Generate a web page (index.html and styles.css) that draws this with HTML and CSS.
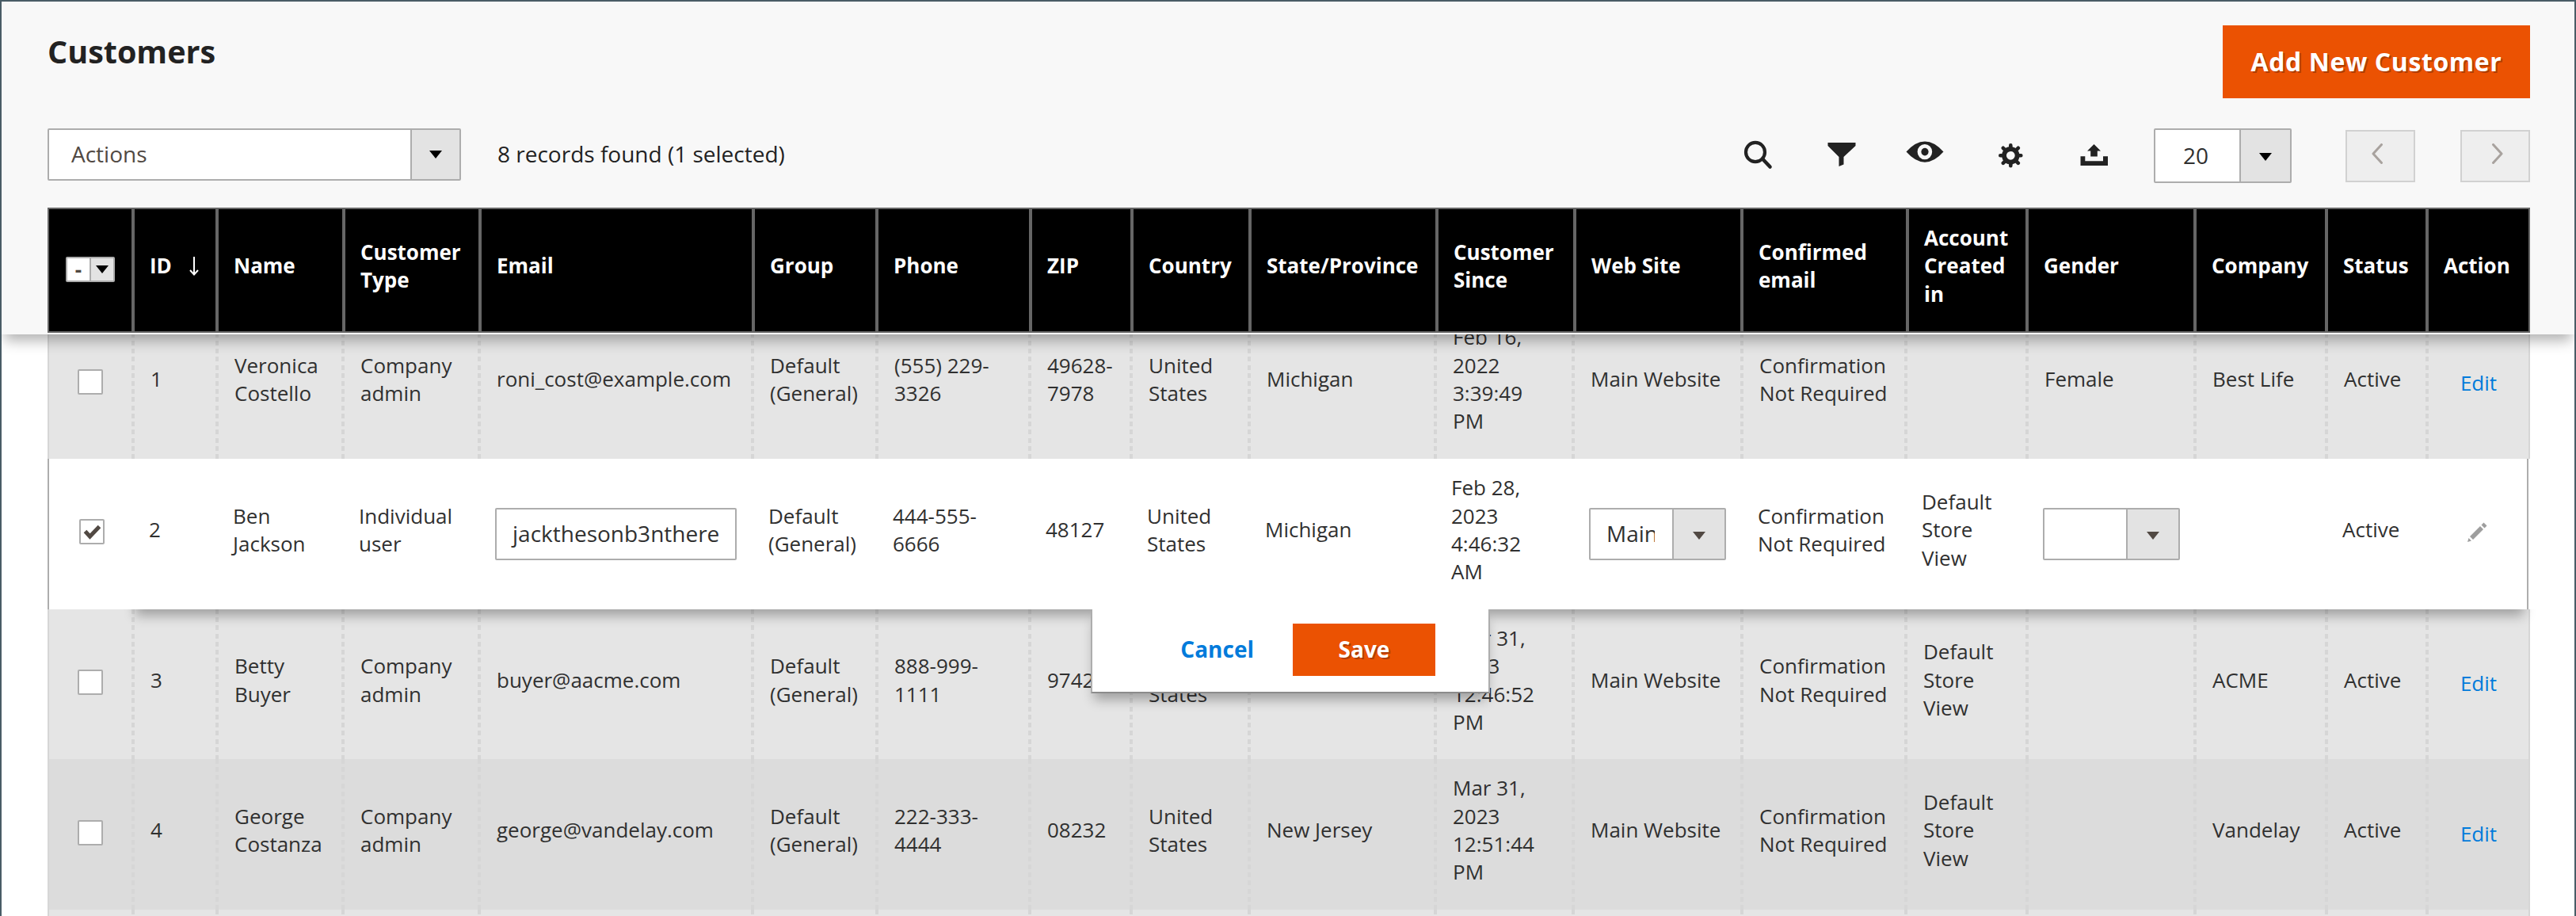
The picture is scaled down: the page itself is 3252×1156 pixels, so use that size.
FILE: index.html
```
<!DOCTYPE html>
<html lang="en">
<head>
<meta charset="utf-8">
<title>Customers</title>
<link rel="stylesheet" href="styles.css">
</head>
<body>
<main class="page">
  <header class="page-header">
    <div class="title-row">
      <h1 class="title">Customers</h1>
      <button class="btn-primary">Add New Customer</button>
    </div>
    <div class="toolbar">
      <div class="select actions-select"><span class="select-text">Actions</span><span class="select-arrow"></span></div>
      <p class="records">8 records found (1 selected)</p>
      <div class="tools">
        <svg viewBox="0 0 48 40"><ellipse cx="20" cy="18" rx="12" ry="12.2" fill="none" stroke="#222" stroke-width="4.2"/><path d="M29 26.500 38.500 36.500" stroke="#222" stroke-width="4.600" stroke-linecap="round"/></svg>
        <svg viewBox="0 0 48 40"><path d="M6.500 6H41.500V10L26.500 24V33.500L20.500 36V24L6.500 10Z"/></svg>
        <svg viewBox="0 0 48 40"><path fill-rule="evenodd" d="M.5 17.600Q12 4.500 24 4.500T47.500 17.600Q36 30.700 24 30.700T.5 17.600ZM33.200 17.600A9.300 9.600 0 1 0 14.600 17.600A9.300 9.600 0 1 0 33.200 17.600Z"/><ellipse cx="24" cy="17.600" rx="4.600" ry="4.900"/></svg>
        <svg viewBox="0 0 48 40"><g transform="translate(27.300 22.300)"><circle r="8.300" fill="none" stroke="#222" stroke-width="5.800"/><path d="M0-9V-13M0 9V13M-9 0H-13M9 0H13M6.600-6.600 9.500-9.500M-6.600 6.600-9.500 9.500M-6.600-6.600-9.500-9.500M6.600 6.600 9.500 9.500" stroke="#222" stroke-width="4.600" stroke-linecap="round"/></g></svg>
        <svg viewBox="0 0 48 40"><path d="M27.500 8 36 16.500H31.800V23.500H23.200V16.500H19ZM10.500 23.200H16.300V29.200H39V23.200H45V35H10.500Z"/></svg>
      </div>
      <div class="select size-select"><span class="select-text">20</span><span class="select-arrow"></span></div>
      <div class="pager">
        <button class="pager-btn"><svg viewBox="0 0 16 26"><path d="M13.500 1.500 3 13 13.500 24.500"/></svg></button>
        <button class="pager-btn next"><svg viewBox="0 0 16 26"><path d="M2.500 1.500 13 13 2.500 24.500"/></svg></button>
      </div>
    </div>
    <div class="grid-head">
      <div class="th check-th"><span class="multicheck"><i>-</i><b></b></span></div>
      <div class="th">ID<svg class="sort" viewBox="0 0 12 24"><path d="M6 0V22M1 17 6 22.500 11 17"/></svg></div>
      <div class="th">Name</div>
      <div class="th">Customer<br>Type</div>
      <div class="th">Email</div>
      <div class="th">Group</div>
      <div class="th">Phone</div>
      <div class="th">ZIP</div>
      <div class="th">Country</div>
      <div class="th">State/Province</div>
      <div class="th">Customer<br>Since</div>
      <div class="th">Web Site</div>
      <div class="th">Confirmed<br>email</div>
      <div class="th">Account<br>Created<br>in</div>
      <div class="th">Gender</div>
      <div class="th">Company</div>
      <div class="th">Status</div>
      <div class="th">Action</div>
    </div>
  </header>

  <section class="grid-body">
    <div class="row">
      <div class="td check-td"><span class="checkbox"></span></div>
      <div class="td">1</div>
      <div class="td">Veronica<br>Costello</div>
      <div class="td">Company<br>admin</div>
      <div class="td">roni_cost@example.com</div>
      <div class="td">Default<br>(General)</div>
      <div class="td">(555) 229-<br>3326</div>
      <div class="td">49628-<br>7978</div>
      <div class="td">United<br>States</div>
      <div class="td">Michigan</div>
      <div class="td">Feb 16,<br>2022<br>3:39:49<br>PM</div>
      <div class="td">Main Website</div>
      <div class="td">Confirmation<br>Not Required</div>
      <div class="td"></div>
      <div class="td">Female</div>
      <div class="td">Best Life</div>
      <div class="td">Active</div>
      <div class="td action-td"><a>Edit</a></div>
    </div>

    <div class="row row-editing">
      <div class="td check-td"><span class="checkbox"><svg viewBox="0 0 28 28"><path d="M5.500 13.500 11.500 20 23.500 7.500"/></svg></span></div>
      <div class="td">2</div>
      <div class="td">Ben<br>Jackson</div>
      <div class="td">Individual<br>user</div>
      <div class="td field-td"><span class="input">jackthesonb3nthere</span></div>
      <div class="td">Default<br>(General)</div>
      <div class="td">444-555-<br>6666</div>
      <div class="td">48127</div>
      <div class="td">United<br>States</div>
      <div class="td">Michigan</div>
      <div class="td">Feb 28,<br>2023<br>4:46:32<br>AM</div>
      <div class="td field-td"><span class="select cell-select"><span class="select-text"><span class="clip">Main Website</span></span><span class="select-arrow"></span></span></div>
      <div class="td">Confirmation<br>Not Required</div>
      <div class="td">Default<br>Store<br>View</div>
      <div class="td field-td"><span class="select cell-select"><span class="select-text"></span><span class="select-arrow"></span></span></div>
      <div class="td"></div>
      <div class="td">Active</div>
      <div class="td action-td"><svg class="pencil" viewBox="0 0 26 26"><path d="M21.500.5 25.500 4.500 22.500 7.500 18.500 3.500ZM17 5 21 9 8 22 4 18ZM2.500 20 6 23.500 1 25Z"/></svg></div>
      <div class="edit-popup"><a class="cancel">Cancel</a><button class="btn-primary save">Save</button></div>
    </div>

    <div class="row row-short">
      <div class="td check-td"><span class="checkbox"></span></div>
      <div class="td">3</div>
      <div class="td">Betty<br>Buyer</div>
      <div class="td">Company<br>admin</div>
      <div class="td">buyer@aacme.com</div>
      <div class="td">Default<br>(General)</div>
      <div class="td">888-999-<br>1111</div>
      <div class="td">97423</div>
      <div class="td">United<br>States</div>
      <div class="td">Oregon</div>
      <div class="td">Mar 31,<br>2023<br>12:46:52<br>PM</div>
      <div class="td">Main Website</div>
      <div class="td">Confirmation<br>Not Required</div>
      <div class="td">Default<br>Store<br>View</div>
      <div class="td"></div>
      <div class="td">ACME</div>
      <div class="td">Active</div>
      <div class="td action-td"><a>Edit</a></div>
    </div>

    <div class="row row-dark">
      <div class="td check-td"><span class="checkbox"></span></div>
      <div class="td">4</div>
      <div class="td">George<br>Costanza</div>
      <div class="td">Company<br>admin</div>
      <div class="td">george@vandelay.com</div>
      <div class="td">Default<br>(General)</div>
      <div class="td">222-333-<br>4444</div>
      <div class="td">08232</div>
      <div class="td">United<br>States</div>
      <div class="td">New Jersey</div>
      <div class="td">Mar 31,<br>2023<br>12:51:44<br>PM</div>
      <div class="td">Main Website</div>
      <div class="td">Confirmation<br>Not Required</div>
      <div class="td">Default<br>Store<br>View</div>
      <div class="td"></div>
      <div class="td">Vandelay</div>
      <div class="td">Active</div>
      <div class="td action-td"><a>Edit</a></div>
    </div>

    <div class="row">
      <div class="td"></div><div class="td"></div><div class="td"></div><div class="td"></div><div class="td"></div><div class="td"></div>
      <div class="td"></div><div class="td"></div><div class="td"></div><div class="td"></div><div class="td"></div><div class="td"></div>
      <div class="td"></div><div class="td"></div><div class="td"></div><div class="td"></div><div class="td"></div><div class="td"></div>
    </div>
  </section>
</main>
</body>
</html>
```
FILE: styles.css
```
* { box-sizing: border-box; }

body {
  margin: 0;
  font-family: "Open Sans", "Noto Sans", sans-serif;
  font-size: 26px;
  line-height: 35.36px;
  color: #303030;
  background: #fff;
}

.page {
  height: 1156px;
  overflow: hidden;
  border: 2px solid #495c66;
  border-bottom: 0;
}

h1, p { margin: 0; }
button { font: inherit; border: 0; padding: 0; }

/* Sticky header */
.page-header {
  position: relative;
  z-index: 2;
  height: 420px;
  padding: 30px 56px 0 58px;
  background: #f8f8f8;
  box-shadow: 0 12px 16px -4px rgba(0, 0, 0, .3);
}

.title-row {
  display: flex;
  justify-content: space-between;
  height: 130px;
}

.title {
  font-size: 39.500px;
  font-weight: 700;
  line-height: 66px;
  color: #222;
}

.btn-primary {
  width: 388px;
  height: 92px;
  background: #eb5202;
  color: #fff;
  font-size: 32px;
  font-weight: 700;
  letter-spacing: .6px;
  text-shadow: 2px 2px 0 rgba(0, 0, 0, .25);
}

.toolbar {
  display: flex;
  align-items: flex-start;
  height: 100px;
  font-size: 28px;
}

.select {
  display: flex;
  height: 66px;
  border: 2px solid #adadad;
  background: #fff;
  border-radius: 2px;
}

.select-text {
  flex: 1;
  min-width: 0;
  line-height: 61px;
}

.select-arrow {
  display: flex;
  flex: none;
  align-items: center;
  justify-content: center;
  width: 62px;
  border-left: 2px solid #adadad;
  background: #e3e3e3;
}

.select-arrow::after,
.multicheck b::after {
  content: "";
  border: 8px solid transparent;
  border-top: 10px solid #000;
  border-bottom: 0;
}

.actions-select { width: 522px; }
.actions-select .select-text { padding-left: 28px; color: #514943; }
.records { margin-left: 46px; line-height: 65px; color: #222; }

.tools {
  display: flex;
  gap: 57px;
  margin: 12px 55px 0 auto;
}

.tools svg { width: 48px; height: 40px; fill: #222; overflow: visible; }

.size-select { width: 174px; height: 69px; }
.size-select .select-text { text-align: center; line-height: 64px; padding-right: 4px; }
.size-select .select-arrow { width: 64px; padding-top: 3px; }

.pager { display: flex; gap: 57px; margin: 2px 0 0 68px; }

.pager-btn {
  display: flex;
  justify-content: center;
  width: 88px;
  height: 66px;
  padding: 15px 8px 0 0;
  border: 2px solid #d1d1d1;
  background: #eee;
}

.pager-btn.next { padding: 15px 0 0 6px; }
.pager-btn svg { width: 16px; height: 26px; fill: none; stroke: #a8a29e; stroke-width: 3; stroke-linecap: round; stroke-linejoin: round; }

/* Column headings */
.grid-head,
.row {
  display: grid;
}

.grid-head {
  grid-template-columns: 106px 106px 160px 172px 345px 156px 194px 128px 149px 236px 174px 211px 209px 151px 212px 166px 127px 132px;
  height: 158px;
  background: #000;
  border: 2px solid #666;
  border-width: 2px 0;
}

.th {
  display: flex;
  align-items: center;
  padding: 0 0 10px 19px;
  border-left: 4px solid #666;
  color: #fff;
  font-weight: 700;
  white-space: nowrap;
}

.th:first-child { border-left-width: 2px; }
.th:last-child { border-right: 2px solid #666; }
.th.check-th { padding: 0 0 2px 21px; }

.multicheck {
  display: flex;
  width: 62px;
  height: 32px;
  border: 2px solid #adadad;
  border-radius: 2px;
  background: #fff;
}

.multicheck i {
  width: 28px;
  font-style: normal;
  line-height: 28px;
  text-align: center;
  color: #514943;
}

.multicheck b {
  display: flex;
  flex: 1;
  align-items: center;
  justify-content: center;
  border-left: 2px solid #adadad;
  background: #e3e3e3;
}

.sort { width: 12px; height: 24px; margin-left: 22px; fill: none; stroke: #fff; stroke-width: 2; }

/* Rows */
.grid-body {
  margin: -33px 56px 0 58px;
}

.row {
  position: relative;
  grid-template-columns: 106px 106px 159px 172px 345px 157px 193px 128px 149px 235px 174px 213px 207px 153px 212px 166px 127px 132px;
  height: 190px;
  background: #e5e5e5;
  border-right: 2px solid #d6d6d6;
}

.row-short { height: 189px; }
.row-dark { background: #dcdcdc; }

.td {
  display: flex;
  align-items: center;
  padding: 0 0 10px 24px;
  white-space: nowrap;
  background: repeating-linear-gradient(#d6d6d6 0 6px, transparent 6px 10.22px) left top / 4px 100% no-repeat;
}

.td:first-child { background: linear-gradient(#d6d6d6, #d6d6d6) left top / 2px 100% no-repeat; }
.td.check-td { padding: 0 0 5px 38px; }
.td.action-td { padding: 0 2px 1px 0; justify-content: center; }
.td.action-td a { color: #007bdb; padding-left: 4px; }

.checkbox {
  width: 32px;
  height: 32px;
  border: 2px solid #adadad;
  border-radius: 2px;
  background: #fff;
}

.checkbox svg { display: block; width: 28px; height: 28px; fill: none; stroke: #514943; stroke-width: 5; }

.row-editing {
  z-index: 1;
  width: 3132px;
  background: #fff;
  border-right: 2px solid #adadad;
}

/* Shadow cast only below the row, starting after the checkbox column */
.row-editing::after {
  content: "";
  position: absolute;
  z-index: -1;
  inset: 40px 0 0 107px;
  box-shadow: 0 12px 14px -4px rgba(0, 0, 0, .3);
  clip-path: inset(150px -20px -40px -20px);
}

.row-editing .td { background: none; padding-left: 22px; }
.row-editing .td:first-child { background: linear-gradient(#adadad, #adadad) left top / 2px 100% no-repeat; }
.row-editing .check-td { padding: 0 0 6px 40px; }
.row-editing .field-td { padding: 0 0 0 22px; font-size: 28px; }
.row-editing .action-td { padding: 0 2px 4px 0; }

.input {
  width: 305px;
  height: 66px;
  padding-left: 20px;
  border: 2px solid #adadad;
  border-radius: 2px;
  line-height: 61px;
}

.cell-select { width: 173px; }
.cell-select .select-text { padding: 0 22px 0 20px; }
.cell-select .select-arrow { width: 66px; }
.cell-select .select-arrow::after { border-top-color: #514943; margin-top: 4px; }
.clip { display: block; overflow: hidden; }

.pencil { width: 26px; height: 26px; fill: #9e9e9e; }

/* Inline edit confirmation */
.edit-popup {
  position: absolute;
  top: 190px;
  left: 1317px;
  display: flex;
  align-items: flex-start;
  justify-content: flex-end;
  width: 504px;
  height: 106px;
  padding: 18px 67px 0 0;
  gap: 49px;
  border: 2px solid #adadad;
  border-top: 0;
  border-bottom-color: #8c8c8c;
  background: #fff;
  box-shadow: 0 12px 14px -4px rgba(0, 0, 0, .3);
}

.cancel { color: #007bdb; font-size: 28px; font-weight: 700; line-height: 65px; }
.save { width: 180px; height: 66px; font-size: 28px; letter-spacing: 0; }
```
